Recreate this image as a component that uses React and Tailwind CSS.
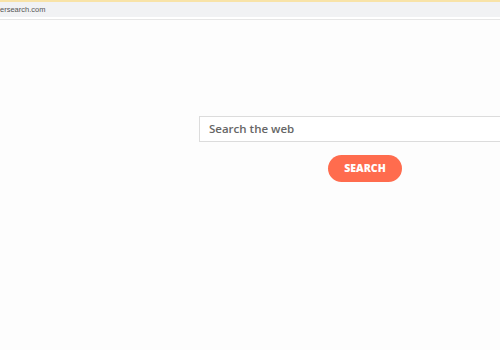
export default function App() {
  return (
    <div className="w-[500px] h-[350px] overflow-hidden bg-[#fdfdfd] font-['Open_Sans',sans-serif]">
      <div className="h-[2px] bg-[#f8e3a8]" />
      <div className="h-[15px] bg-[#f1f2f4] flex items-center text-[7.5px] leading-none text-[#555] font-['Liberation_Sans',sans-serif]">
        <span>ersearch.com</span>
      </div>
      <div className="h-[2px] bg-white" />
      <div className="h-[1px] bg-[#e6e6e6]" />
      <div className="pt-[96px] pl-[199px]">
        <div className="w-[320px] h-[26px] border border-[#dcdcdc] bg-white flex items-center pl-[9px] text-[11.5px] font-semibold text-[#666]">
          Search the web
        </div>
        <div className="mt-[12px] pl-[129px]">
          <button className="w-[74px] h-[27px] rounded-full bg-[#ff6c4e] text-white text-[10.5px] font-extrabold">
            SEARCH
          </button>
        </div>
      </div>
    </div>
  )
}
